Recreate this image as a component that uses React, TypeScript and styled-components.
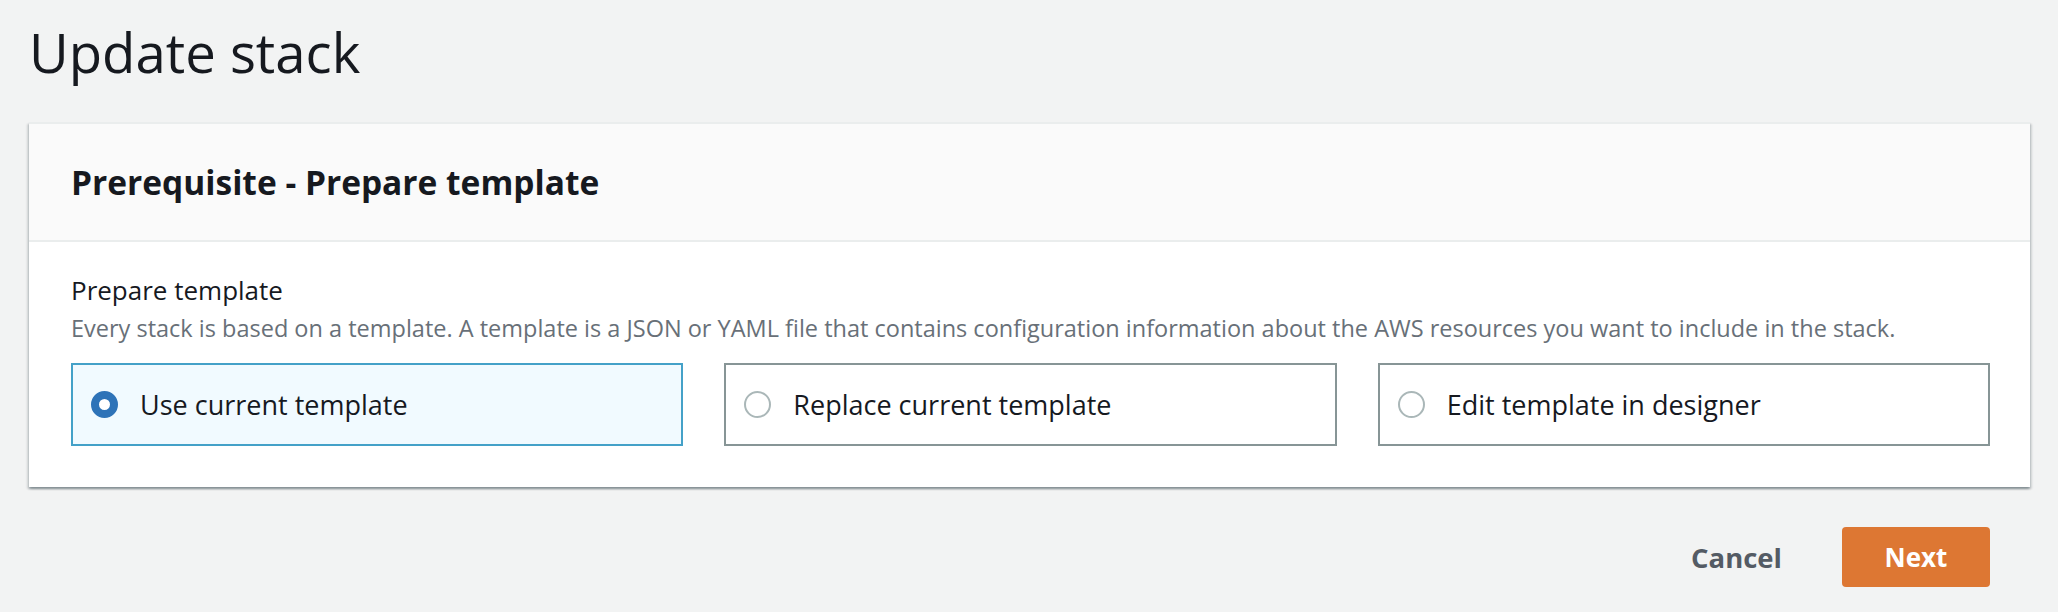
import React, { useState } from 'react';
import styled, { createGlobalStyle, css } from 'styled-components';

const GlobalStyle = createGlobalStyle`
	html, body {
		margin: 0;
		padding: 0;
		background: #f2f3f3;
	}
	body {
		font-family: 'Open Sans', 'Noto Sans', 'Liberation Sans', sans-serif;
		color: #16191f;
	}
`;

const options = [
	{ id: 'current', label: 'Use current template' },
	{ id: 'replace', label: 'Replace current template' },
	{ id: 'designer', label: 'Edit template in designer' },
];

export default function App() {
	const [selected, setSelected] = useState('current');

	return (
		<>
			<GlobalStyle />
			<Page>
				<PageTitle>Update stack</PageTitle>

				<Card>
					<CardHeader>
						<CardTitle>Prerequisite - Prepare template</CardTitle>
					</CardHeader>
					<CardBody>
						<FieldLabel>Prepare template</FieldLabel>
						<FieldDescription>
							Every stack is based on a template. A template is a JSON or YAML file that contains configuration information about the AWS resources you want to include in the stack.
						</FieldDescription>
						<TileGrid>
							{options.map((option) => (
								<Tile key={option.id} $active={selected === option.id} onClick={() => setSelected(option.id)}>
									<RadioDot $active={selected === option.id} />
									<TileLabel>{option.label}</TileLabel>
								</Tile>
							))}
						</TileGrid>
					</CardBody>
				</Card>

				<Footer>
					<LinkButton>Cancel</LinkButton>
					<PrimaryButton>Next</PrimaryButton>
				</Footer>
			</Page>
		</>
	);
}

const Page = styled.div`
	padding: 14px 28px 0 29px;
`;

const PageTitle = styled.h1`
	margin: 0;
	font-size: 54.5px;
	line-height: 76px;
	font-weight: 400;
	color: #16191f;
`;

const Card = styled.section`
	margin-top: 32px;
	background: #ffffff;
	box-shadow: 0 2px 2px 0 rgba(0, 28, 36, 0.3), 2px 2px 2px 0 rgba(0, 28, 36, 0.12), -2px 2px 2px 0 rgba(0, 28, 36, 0.12);
	border-top: 2px solid #eaeded;
`;

const CardHeader = styled.div`
	height: 116px;
	display: flex;
	align-items: center;
	padding: 0 42px;
	background: #fafafa;
	border-bottom: 2px solid #eaeded;
`;

const CardTitle = styled.h2`
	margin: 0;
	font-size: 33.5px;
	font-weight: 700;
	color: #16191f;
`;

const CardBody = styled.div`
	padding: 30px 40px 41px 42px;
`;

const FieldLabel = styled.div`
	font-size: 26px;
	line-height: 36px;
	color: #16191f;
`;

const FieldDescription = styled.div`
	margin-top: 3px;
	font-size: 23.5px;
	line-height: 34px;
	color: #687078;
`;

const TileGrid = styled.div`
	margin-top: 18px;
	display: grid;
	grid-template-columns: repeat(3, 1fr);
	gap: 41px;
`;

const Tile = styled.label<{ $active: boolean }>`
	height: 83px;
	box-sizing: border-box;
	display: flex;
	align-items: center;
	gap: 22px;
	padding: 0 18px;
	border: 2px solid #879596;
	background: #ffffff;
	cursor: pointer;

	${({ $active }) =>
		$active &&
		css`
			border-color: #44a1c8;
			background: #f1faff;
		`}
`;

const RadioDot = styled.span<{ $active: boolean }>`
	width: 27px;
	height: 27px;
	box-sizing: border-box;
	border-radius: 50%;
	flex-shrink: 0;
	border: 2px solid #aab7b8;
	background: #ffffff;

	${({ $active }) =>
		$active &&
		css`
			border: 8px solid #2e73b8;
		`}
`;

const TileLabel = styled.span`
	font-size: 27px;
	color: #16191f;
`;

const Footer = styled.div`
	display: flex;
	justify-content: flex-end;
	align-items: center;
	gap: 60px;
	margin-top: 40px;
	padding-right: 40px;
`;

const LinkButton = styled.button`
	border: none;
	background: transparent;
	padding: 0;
	font-family: inherit;
	font-size: 27.5px;
	font-weight: 700;
	color: #545b64;
	cursor: pointer;
`;

const PrimaryButton = styled.button`
	width: 148px;
	height: 60px;
	border: none;
	border-radius: 4px;
	background: #dd7733;
	font-family: inherit;
	font-size: 26px;
	font-weight: 700;
	color: #ffffff;
	cursor: pointer;
`;
